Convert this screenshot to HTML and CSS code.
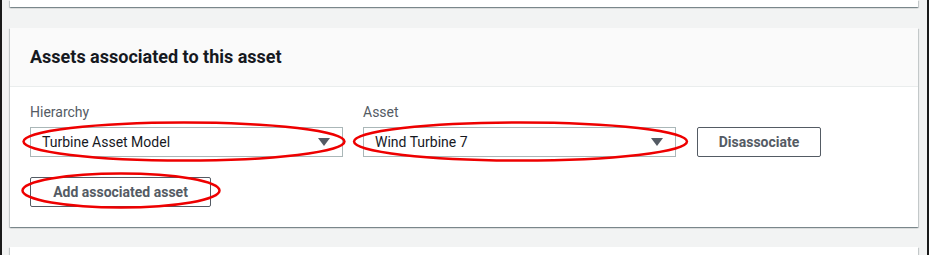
FILE: index.html
```html
<!DOCTYPE html>
<html lang="en">
<head>
  <meta charset="UTF-8" />
  <title>Associated assets</title>
  <link rel="stylesheet" href="styles.css">
</head>
<body>
  <div class="frame">
    <div class="card card-top"></div>

    <div class="card">
      <div class="card-header">
        <h2>Assets associated to this asset</h2>
      </div>
      <div class="card-body">
        <div class="row">
          <div class="field">
            <label class="label">Hierarchy</label>
            <div class="select">
              <span>Turbine Asset Model</span>
              <span class="caret"></span>
            </div>
          </div>
          <div class="field">
            <label class="label">Asset</label>
            <div class="select">
              <span>Wind Turbine 7</span>
              <span class="caret"></span>
            </div>
          </div>
          <button class="btn">Disassociate</button>
        </div>
        <button class="btn btn-add">Add associated asset</button>
      </div>
    </div>

    <div class="card card-bottom"></div>

    <!-- red annotation marks drawn over the form -->
    <svg class="marks" width="929" height="255" viewBox="0 0 929 255">
      <ellipse cx="184" cy="141.5" rx="160.5" ry="19" />
      <ellipse cx="520.5" cy="141.5" rx="166.5" ry="19" />
      <ellipse cx="121" cy="190.5" rx="98.5" ry="17" />
    </svg>
  </div>
</body>
</html>
```

FILE: styles.css
```css
body {
  margin: 0;
  font-family: Roboto, "Liberation Sans", Arial, sans-serif;
  color: #16191f;
}
.frame {
  position: relative;
  width: 929px;
  height: 255px;
  overflow: hidden;
  box-sizing: border-box;
  background: #f2f3f3;
  border-left: 2px solid #1a1a1a;
  border-right: 2px solid #1a1a1a;
  padding: 0 9px 0 8px;
}
.card {
  background: #fff;
  box-shadow: 0 1px 1px 0 rgba(0,28,36,0.3), 1px 1px 1px 0 rgba(0,28,36,0.15), -1px 1px 1px 0 rgba(0,28,36,0.15);
}
.card-top {
  height: 7px;
  margin-bottom: 21px;
}
.card-header {
  background: #fafafa;
  border-bottom: 1px solid #eaeded;
  height: 58px;
  padding: 0 20px;
  display: flex;
  align-items: center;
}
.card-header h2 {
  margin: 0;
  font-size: 18px;
  font-weight: 700;
  line-height: 22px;
}
.card-body {
  padding: 14px 20px 20px;
}
.row {
  display: flex;
  align-items: flex-end;
  margin-bottom: 20px;
}
.field {
  width: 313px;
  margin-right: 20px;
}
.label {
  display: block;
  font-size: 14px;
  line-height: 22px;
  color: #545b64;
  margin-bottom: 4px;
}
.select {
  height: 30px;
  box-sizing: border-box;
  border: 1px solid #aab7b8;
  display: flex;
  align-items: center;
  justify-content: space-between;
  padding: 0 10px 0 11px;
  font-size: 14px;
}
.caret {
  width: 0;
  height: 0;
  border-left: 6px solid transparent;
  border-right: 6px solid transparent;
  border-top: 8px solid #545b64;
  margin-right: 2px;
}
.btn {
  height: 30px;
  box-sizing: border-box;
  background: #fff;
  border: 1px solid #545b64;
  border-radius: 2px;
  color: #545b64;
  font-family: inherit;
  font-size: 14px;
  font-weight: 700;
  padding: 0 20px;
  margin-left: 1px;
}
.btn-add {
  margin-left: 0;
  width: 181px;
}
.row .btn {
  width: 124px;
}
.card-bottom {
  margin-top: 20px;
  height: 20px;
}
.marks {
  position: absolute;
  left: -2px;
  top: 0;
  pointer-events: none;
}
.marks ellipse {
  fill: none;
  stroke: #ee0000;
  stroke-width: 2.5;
}
```
